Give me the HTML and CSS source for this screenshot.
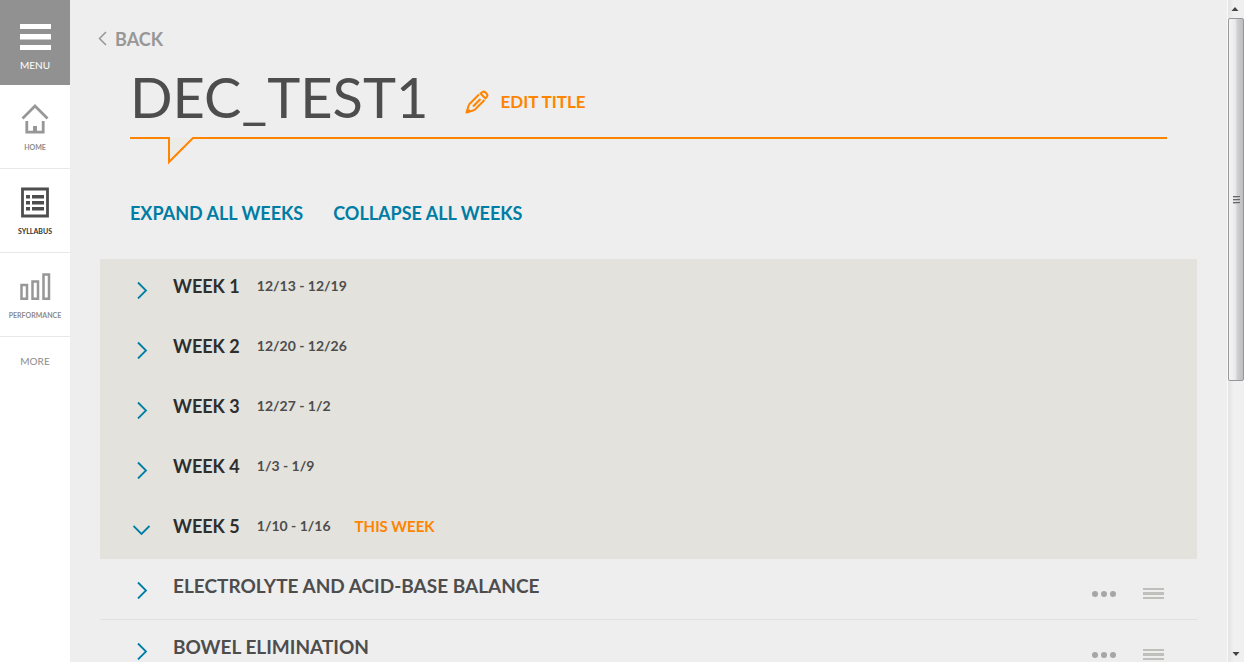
FILE: index.html
```html
<!DOCTYPE html>
<html lang="en">
<head>
<meta charset="utf-8">
<title>DEC_TEST1</title>
<link rel="stylesheet" href="styles.css">
</head>
<body>
<svg class="defs" aria-hidden="true">
  <symbol id="chevron" viewBox="0 0 18 18"><path d="M5 1.500 L13 9.500 L5 17.500" fill="none" stroke="currentColor" stroke-width="1.800"/></symbol>
  <symbol id="dots" viewBox="0 0 24 8"><circle cx="3" cy="4" r="3"/><circle cx="12" cy="4" r="3"/><circle cx="21" cy="4" r="3"/></symbol>
  <symbol id="grip" viewBox="0 0 21 12"><path d="M0 0h21v2H0zM0 4h21v3H0zM0 9h21v2H0z"/></symbol>
</svg>
<nav class="sidebar">
  <button class="menu" type="button">
    <svg width="31" height="27" viewBox="0 0 31 27" fill="#fff"><path d="M0 0h31v5H0zM0 10h31v5.500H0zM0 21h31v5H0z"/></svg>
    <span>MENU</span>
  </button>
  <a class="tile" href="#home">
    <svg width="28" height="32" viewBox="0 0 28 32" fill="none" stroke="#979797" stroke-width="2.800"><path d="M1.500 16.500 L14 4 L26.500 16.500"/><path d="M5.800 19v11.200h16.400V19"/><path d="M14 24v6" stroke-width="4"/></svg>
    <span>HOME</span>
  </a>
  <a class="tile current" href="#syllabus">
    <svg width="28" height="32" viewBox="0 0 28 32"><path d="M1.500 3h25v27h-25z" fill="none" stroke="#4d4d4d" stroke-width="2.800"/><path d="M5 9h4v3.500H5zM11 9h12v3.500H11zM5 15h4v3.500H5zM11 15h12v3.500H11zM5 21h4v3.500H5zM11 21h12v3.500H11z" fill="#4d4d4d"/></svg>
    <span>SYLLABUS</span>
  </a>
  <a class="tile" href="#performance">
    <svg width="31" height="32" viewBox="0 0 31 32" fill="none" stroke="#979797" stroke-width="2.500"><path d="M1.500 15h5.500v13.800H1.500zM12.500 11.500H18v17.300h-5.500zM23.500 4.500H29v24.300h-5.500z"/></svg>
    <span>PERFORMANCE</span>
  </a>
  <a class="more" href="#more">MORE</a>
</nav>
<main class="page">
  <a class="back" href="#back"><svg width="9" height="16" viewBox="0 0 9 16" fill="none" stroke="currentColor" stroke-width="1.500"><path d="M8 1 L1.500 7.500 L8 14"/></svg>BACK</a>
  <header class="heading">
    <h1>DEC_TEST1</h1>
    <button class="edit" type="button">
      <svg width="24" height="24" viewBox="0 0 24 24" fill="none" stroke="currentColor" stroke-width="2" stroke-linejoin="round"><path d="M4 14.500 L14 4.500 M9.500 20 L19.500 10 M4 14.500 L1.500 22.500 L9.500 20"/><path d="M3 20 l1.500 1.500" stroke-width="3"/><path d="M8 16.500 L15.500 9" stroke-width="2.200"/><path d="M15.500 3.500 L17.500 2 Q19 1 20.500 2.500 L21.500 3.500 Q23 5 22 6.500 L20.500 8.500 Z"/></svg>
      EDIT TITLE
    </button>
  </header>
  <div class="rule"><svg width="64" height="28" viewBox="0 0 64 28"><path d="M0 1H39V25L63 1H64" fill="#ecebe5" stroke="none"/><path d="M0 1H39V25L63 1H64" fill="none" stroke="#ff8400" stroke-width="2"/></svg></div>
  <div class="actions">
    <button type="button">EXPAND ALL WEEKS</button>
    <button type="button">COLLAPSE ALL WEEKS</button>
  </div>
  <section class="weeks">
    <button class="row" type="button"><svg class="chevron"><use href="#chevron"/></svg><b>WEEK 1</b><span class="dates">12/13 - 12/19</span></button>
    <button class="row" type="button"><svg class="chevron"><use href="#chevron"/></svg><b>WEEK 2</b><span class="dates">12/20 - 12/26</span></button>
    <button class="row" type="button"><svg class="chevron"><use href="#chevron"/></svg><b>WEEK 3</b><span class="dates">12/27 - 1/2</span></button>
    <button class="row" type="button"><svg class="chevron"><use href="#chevron"/></svg><b>WEEK 4</b><span class="dates">1/3 - 1/9</span></button>
    <button class="row" type="button" aria-expanded="true"><svg class="chevron open"><use href="#chevron"/></svg><b>WEEK 5</b><span class="dates">1/10 - 1/16</span><span class="now">THIS WEEK</span></button>
  </section>
  <section class="topics">
    <div class="topic">
      <button class="row" type="button"><svg class="chevron"><use href="#chevron"/></svg>ELECTROLYTE AND ACID-BASE BALANCE</button>
      <button class="tool" type="button" aria-label="Options"><svg class="dots"><use href="#dots"/></svg></button>
      <button class="tool" type="button" aria-label="Reorder"><svg class="grip"><use href="#grip"/></svg></button>
    </div>
    <div class="topic">
      <button class="row" type="button"><svg class="chevron"><use href="#chevron"/></svg>BOWEL ELIMINATION</button>
      <button class="tool" type="button" aria-label="Options"><svg class="dots"><use href="#dots"/></svg></button>
      <button class="tool" type="button" aria-label="Reorder"><svg class="grip"><use href="#grip"/></svg></button>
    </div>
  </section>
</main>
<div class="scrollbar" aria-hidden="true">
  <svg class="arrow" viewBox="0 0 16 18"><path d="M7 7l3.500 4h-7z" fill="#444"/></svg>
  <div class="track"><div class="thumb"><i></i><i></i><i></i></div></div>
  <svg class="arrow" viewBox="0 0 16 18"><path d="M4.500 8h7L8 12z" fill="#444"/></svg>
</div>
</body>
</html>
```
FILE: styles.css
```css
* { box-sizing: border-box; }
body {
  margin: 0;
  height: 100vh;
  display: flex;
  overflow: hidden;
  background: #eee;
  color: #4d4d4d;
  font-family: Lato, "Open Sans", sans-serif;
}
button {
  border: 0;
  padding: 0;
  background: none;
  color: inherit;
  font: inherit;
  text-align: left;
  cursor: pointer;
}
a { color: inherit; text-decoration: none; }
svg { flex: none; display: block; }
.defs { width: 0; height: 0; position: absolute; }

.sidebar { flex: none; width: 70px; background: #fff; color: #8c8c8c; display: flex; flex-direction: column; }
.menu {
  height: 85px;
  padding-top: 24px;
  background: #919191;
  color: #fff;
  font-size: 10px;
  line-height: 12px;
  display: flex;
  flex-direction: column;
  align-items: center;
  gap: 8px;
}
.tile {
  height: 84px;
  padding-top: 17px;
  border-bottom: 1px solid #e8e8e8;
  font-size: 7px;
  font-weight: 700;
  line-height: 10px;
  display: flex;
  flex-direction: column;
  align-items: center;
  gap: 8px;
}
.current { color: #333; }
.more { padding-top: 18px; font-size: 10px; line-height: 12px; text-align: center; }

.page { flex: 1; min-width: 0; padding: 0 30px; display: flex; flex-direction: column; }
.page > * { flex: none; }
.back {
  margin-top: 27px;
  align-self: flex-start;
  display: flex;
  align-items: center;
  gap: 8px;
  color: #979797;
  font-size: 18px;
  font-weight: 700;
  line-height: 24px;
}
.back svg { margin-left: -2px; }
.heading { height: 86px; padding: 12px 30px 0; display: flex; align-items: flex-start; gap: 36px; }
h1 { margin: 0; font-size: 56px; font-weight: 400; line-height: 68px; }
.edit {
  margin-top: 27px;
  display: flex;
  align-items: center;
  gap: 12px;
  color: #ff8400;
  font-size: 17px;
  font-weight: 700;
  line-height: 24px;
}
.rule { margin: 0 30px; height: 28px; background: linear-gradient(#ff8400, #ff8400) 64px 0 / 100% 2px no-repeat; }
.actions {
  margin: 36px 30px 34px;
  display: flex;
  gap: 30px;
  color: #007da4;
  font-size: 18px;
  font-weight: 700;
  line-height: 24px;
}
.weeks { background: #e3e2dc; }
.row {
  width: 100%;
  height: 60px;
  padding: 15px 33px 0;
  display: flex;
  align-items: flex-start;
  font-size: 18px;
  line-height: 24px;
}
.chevron { width: 18px; height: 18px; margin: 7px 22px 0 0; color: #007da4; }
.open { transform: rotate(90deg); }
.row b { color: #2e2e2e; font-weight: 700; }
.dates { margin-left: 17px; font-size: 14px; font-weight: 700; }
.now { margin-left: 24px; font-size: 15px; font-weight: 700; color: #ff8400; }
.topic { display: flex; align-items: flex-start; padding-right: 33px; border-bottom: 1px solid #e0e0e0; }
.topic .row { width: auto; flex: 1; font-size: 19px; font-weight: 700; }
.tool { height: 60px; margin-left: 27px; padding-top: 10px; display: flex; align-items: center; }
.dots { width: 24px; height: 8px; fill: #a6a6a6; }
.grip { width: 21px; height: 12px; fill: #bfbfbc; }

.scrollbar { flex: none; width: 17px; border-left: 1px solid #fafafa; background: linear-gradient(90deg, #e3e3e3, #f0f0f0 35%, #f0f0f0); display: flex; flex-direction: column; }
.arrow { width: 16px; height: 18px; }
.track { flex: 1; }
.thumb {
  height: 58%;
  border: 1px solid #979797;
  border-radius: 2px;
  background: linear-gradient(90deg, #f5f5f5, #e9e9eb 45%, #cfcfd2 60%, #bdbdc0);
  display: flex;
  flex-direction: column;
  align-items: center;
  justify-content: center;
  gap: 1px;
}
.thumb i { width: 7px; height: 2px; background: #666; border-bottom: 1px solid #bbb; }
```
